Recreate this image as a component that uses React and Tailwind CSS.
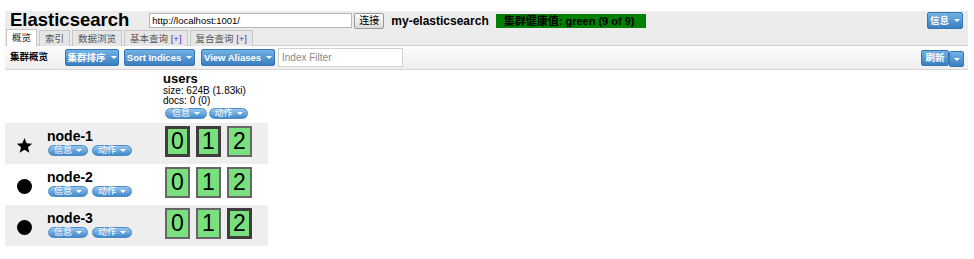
import React from 'react';

const nodes = [
    { name: 'node-1', master: true, shards: [true, true, false], shaded: true },
    { name: 'node-2', master: false, shards: [false, false, false], shaded: false },
    { name: 'node-3', master: false, shards: [false, false, true], shaded: true },
];

const Caret = () => (
    <span className="inline-block shrink-0 w-0 h-0 border-l-[3px] border-r-[3px] border-t-[3px] border-l-transparent border-r-transparent border-t-white" />
);

const BlueButton = ({ label, className = '' }) => (
    <button
        className={`flex items-center justify-center gap-[5px] h-[17px] px-0 rounded-[2px] border border-[#3575b5] bg-gradient-to-b from-[#72b2e3] to-[#3a7fc1] text-white font-bold text-[9.5px] leading-none whitespace-nowrap ${className}`}
    >
        <span>{label}</span>
        <Caret />
    </button>
);

const Pill = ({ label, className = '' }) => (
    <button
        className={`flex items-center justify-center gap-[4px] h-[11px] rounded-full border border-[#4d8cc6] bg-gradient-to-b from-[#96c7ee] to-[#3f89cb] text-white text-[9px] leading-none whitespace-nowrap ${className}`}
    >
        <span>{label}</span>
        <Caret />
    </button>
);

const Shard = ({ num, primary }) => (
    <div
        className={`w-[25px] h-[31px] flex items-center justify-center bg-[#7ae07e] text-[23px] leading-none text-black ${primary ? 'border-[3px] border-[#3e3e3e]' : 'border-2 border-[#666]'}`}
    >
        {num}
    </div>
);

const Star = () => (
    <svg width="17" height="17" viewBox="0 0 24 24">
        <path d="M12 1.5l3 7.3 7.8.6-5.9 5.1 1.9 7.7L12 18l-6.8 4.2 1.9-7.7-5.9-5.1 7.8-.6z" fill="#000" />
    </svg>
);

const tabs = [
    { label: '概览', active: true },
    { label: '索引' },
    { label: '数据浏览' },
    { label: '基本查询', plus: true },
    { label: '复合查询', plus: true },
];

export default function App() {
    return (
        <div className="w-[974px] h-[259px] overflow-hidden bg-white pl-[5px] pr-[6px] pt-[11px] font-['Liberation_Sans','Noto_Sans_CJK_SC',sans-serif] text-black">
            {/* Header */}
            <div className="bg-[#ececec] border-b border-[#cfcfcf]">
                <div className="flex items-center h-[19px] pl-[5px] pr-[5px]">
                    <h1 className="text-[18.5px] font-bold leading-none">Elasticsearch</h1>
                    <input
                        readOnly
                        value="http://localhost:1001/"
                        className="ml-[20px] w-[203px] h-[15px] bg-white border border-[#b5b5b5] px-[2px] text-[9.5px] outline-none"
                    />
                    <button className="ml-[2px] w-[30px] h-[16px] border border-[#9a9a9a] rounded-[2px] bg-gradient-to-b from-white to-[#dcdcdc] text-[10px] leading-none">
                        连接
                    </button>
                    <span className="ml-[7px] text-[12px] font-bold">my-elasticsearch</span>
                    <span className="ml-[7px] w-[150px] h-[14px] bg-[#008000] pl-[8px] text-[11px] font-bold leading-[14px] whitespace-nowrap">
                        集群健康值: green (9 of 9)
                    </span>
                    <BlueButton label="信息" className="ml-auto w-[36px] h-[15px]" />
                </div>
                <div className="flex items-end gap-[2px] h-[16px] pl-[1px] -mb-px">
                    {tabs.map((t) => (
                        <div
                            key={t.label}
                            className={`px-[5px] border border-b-0 border-[#c6c6c6] text-[9.5px] leading-[15px] whitespace-nowrap ${t.active ? 'bg-white text-[#222] h-[17px]' : 'bg-[#e6e6e6] text-[#555] h-[16px]'}`}
                        >
                            {t.label}
                            {t.plus && <span className="text-[#5b2bd6]"> [+]</span>}
                        </div>
                    ))}
                </div>
            </div>

            {/* Toolbar */}
            <div className="flex items-center h-[24px] pl-[5px] pr-[4px] bg-gradient-to-b from-[#fdfdfd] to-[#eeeeee] border-b border-[#d6d6d6]">
                <span className="text-[9.5px] font-bold">集群概览</span>
                <BlueButton label="集群排序" className="ml-[17px] w-[54px]" />
                <BlueButton label="Sort Indices" className="ml-[5px] w-[71px]" />
                <BlueButton label="View Aliases" className="ml-[6px] w-[74px]" />
                <input
                    readOnly
                    placeholder="Index Filter"
                    className="ml-[3px] w-[125px] h-[19px] bg-white border border-[#d0d0d0] px-[3px] text-[10px] placeholder:text-[#888] outline-none"
                />
                <button className="ml-auto h-[16px] w-[28px] rounded-[2px] border border-[#3575b5] bg-gradient-to-b from-[#72b2e3] to-[#3a7fc1] text-white font-bold text-[9.5px] leading-none whitespace-nowrap">
                    刷新
                </button>
                <button className="mt-[3px] h-[16px] w-[15px] flex items-center justify-center rounded-[2px] border border-[#3575b5] bg-gradient-to-b from-[#72b2e3] to-[#3a7fc1]">
                    <Caret />
                </button>
            </div>

            {/* Cluster overview */}
            <div className="w-[263px]">
                <div className="flex">
                    <div className="w-[158px]" />
                    <div className="pt-[1px] mb-[4px]">
                        <div className="text-[13px] font-bold leading-[15px]">users</div>
                        <div className="text-[10px] leading-[10px]">size: 624B (1.83ki)</div>
                        <div className="text-[10px] leading-[10px]">docs: 0 (0)</div>
                        <div className="flex gap-[2px] mt-[2px] pl-[2px]">
                            <Pill label="信息" className="w-[42px]" />
                            <Pill label="动作" className="w-[39px]" />
                        </div>
                    </div>
                </div>

                {nodes.map((n) => (
                    <div key={n.name} className={`flex h-[41px] ${n.shaded ? 'bg-[#eeeeee]' : 'bg-white'}`}>
                        <div className="w-[158px] flex items-center pl-[11px]">
                            <div className="w-[17px] flex justify-center mt-[4px]">
                                {n.master ? <Star /> : <div className="w-[15px] h-[15px] rounded-full bg-black" />}
                            </div>
                            <div className="ml-[14px] self-start pt-[6px]">
                                <div className="text-[14px] font-bold leading-[15px]">{n.name}</div>
                                <div className="flex gap-[4px] mt-[1px] ml-[1px]">
                                    <Pill label="信息" className="w-[40px]" />
                                    <Pill label="动作" className="w-[40px]" />
                                </div>
                            </div>
                        </div>
                        <div className="flex gap-[6px] pl-[2px] pt-[3px]">
                            {n.shards.map((p, i) => (
                                <Shard key={i} num={i} primary={p} />
                            ))}
                        </div>
                    </div>
                ))}
            </div>
        </div>
    );
}
